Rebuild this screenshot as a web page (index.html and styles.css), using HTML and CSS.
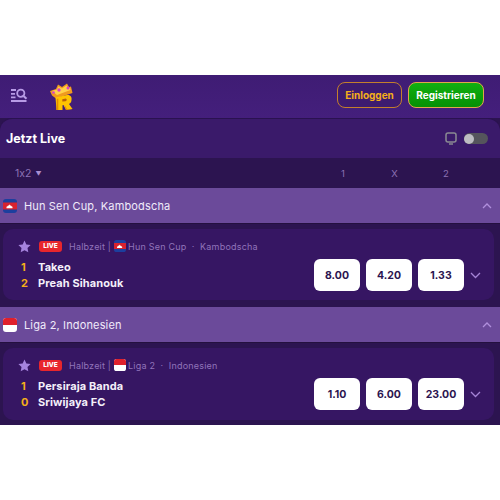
FILE: index.html
```html
<!DOCTYPE html>
<html lang="de">
<head>
<meta charset="utf-8">
<title>Live</title>
<link rel="stylesheet" href="styles.css">
</head>
<body>
<div class="top-space"></div>
<div class="app">
  <header class="header">
    <svg class="menu-search" width="18" height="14" viewBox="0 0 18 14" fill="none" stroke="#b79be6" stroke-width="1.800">
      <path d="M1 2h5M1 5.800h4M1 9.400h4.500M1 13h15.500"/>
      <circle cx="10.800" cy="5.200" r="3.600"/>
      <path d="M13.500 8l3 2.700" stroke-width="2.200"/>
    </svg>
    <svg class="logo" width="23" height="27" viewBox="0 0 23 27">
      <path d="M0 8l6-2 2-4.500 4 2.500 5-3.500 2 3.500 2-.5 1.500 6.500L6 15.500 2 12.500z" fill="#f09a1e"/>
      <path d="M2 8l5-1.500 1.500-3 3.500 2 4.500-3 1.500 3 2-.5.500 2L7 12z" fill="#ffd24a"/>
      <path d="M5.500 14.500L17 12c3.500-.5 5 2 4.500 5 0 2-1 3.300-2.500 4l3.500 5-6.500 1-2.500-5-1 .2V27H6.500z" fill="#ffc400"/>
      <path d="M12.300 16.200l3.400-.7c1.500 0 1.300 2.400-.2 2.700l-3.200.4z" fill="#b8620a"/>
      <path d="M6.500 27l.3-11 1.500-.4V27zM14.500 22l2.700 4.300 5-.5.300.2-6.500 1z" fill="#e58c00"/>
      <circle cx="9" cy="7" r="1.700" fill="#d93fc8"/>
      <circle cx="18" cy="5" r="1.500" fill="#d93fc8"/>
      <circle cx="3.500" cy="9.500" r="1.300" fill="#d93fc8"/>
    </svg>
    <div class="auth">
      <button class="btn btn-login">Einloggen</button>
      <button class="btn btn-register">Registrieren</button>
    </div>
  </header>
  <section class="panel">
    <div class="title-row">
      <h1 class="title">Jetzt Live</h1>
      <svg class="tv" width="12" height="13" viewBox="0 0 12 13" fill="none" stroke="#8a8a92" stroke-width="1.500">
        <rect x="1" y="1" width="10" height="9" rx="2"/>
        <path d="M4 12h4"/>
      </svg>
      <span class="toggle"><span class="knob"></span></span>
    </div>
    <div class="market-row">
      <span class="market">1x2 <i class="caret">▼</i></span>
      <div class="cols"><span>1</span><span>X</span><span>2</span></div>
    </div>

    <div class="group-head">
      <svg class="flag-lg" viewBox="0 0 14 14"><use href="#kh"/></svg>
      <span class="group-name">Hun Sen Cup, Kambodscha</span>
      <svg class="chev" width="10" height="6" viewBox="0 0 10 6" fill="none" stroke="#b08fdc" stroke-width="1.300"><path d="M1 5l4-4 4 4"/></svg>
    </div>
    <article class="card">
      <div class="meta">
        <svg class="star" width="13" height="13" viewBox="0 0 24 24"><path d="M12 1l3.400 7.300 7.900 1-5.800 5.500 1.500 7.900-7-3.900-7 3.900 1.500-7.900L.7 9.300l7.900-1z"/></svg>
        <span class="live">LIVE</span>
        <span class="info">Halbzeit |</span>
        <svg class="flag-sm" viewBox="0 0 14 14"><use href="#kh"/></svg>
        <span class="info">Hun Sen Cup&nbsp; · &nbsp;Kambodscha</span>
      </div>
      <div class="body">
        <div class="teams">
          <div class="team"><b class="score">1</b><span>Takeo</span></div>
          <div class="team"><b class="score">2</b><span>Preah Sihanouk</span></div>
        </div>
        <button class="odd">8.00</button><button class="odd">4.20</button><button class="odd">1.33</button>
        <svg class="chev-down" width="11" height="7" viewBox="0 0 11 7" fill="none" stroke="#a583d6" stroke-width="1.300"><path d="M1 1l4.500 4.500L10 1"/></svg>
      </div>
    </article>

    <div class="group-head">
      <svg class="flag-lg" viewBox="0 0 14 14"><use href="#id"/></svg>
      <span class="group-name">Liga 2, Indonesien</span>
      <svg class="chev" width="10" height="6" viewBox="0 0 10 6" fill="none" stroke="#b08fdc" stroke-width="1.300"><path d="M1 5l4-4 4 4"/></svg>
    </div>
    <article class="card card-last">
      <div class="meta">
        <svg class="star" width="13" height="13" viewBox="0 0 24 24"><path d="M12 1l3.400 7.300 7.900 1-5.800 5.500 1.500 7.900-7-3.900-7 3.900 1.500-7.900L.7 9.300l7.900-1z"/></svg>
        <span class="live">LIVE</span>
        <span class="info">Halbzeit |</span>
        <svg class="flag-sm" viewBox="0 0 14 14"><use href="#id"/></svg>
        <span class="info">Liga 2&nbsp; · &nbsp;Indonesien</span>
      </div>
      <div class="body">
        <div class="teams">
          <div class="team"><b class="score">1</b><span>Persiraja Banda</span></div>
          <div class="team"><b class="score">0</b><span>Sriwijaya FC</span></div>
        </div>
        <button class="odd">1.10</button><button class="odd">6.00</button><button class="odd">23.00</button>
        <svg class="chev-down" width="11" height="7" viewBox="0 0 11 7" fill="none" stroke="#a583d6" stroke-width="1.300"><path d="M1 1l4.500 4.500L10 1"/></svg>
      </div>
    </article>
  </section>
</div>
<svg class="defs" width="0" height="0">
  <defs>
    <g id="kh">
      <rect width="14" height="14" rx="3" fill="#1c3f9e"/>
      <rect y="3.500" width="14" height="7" fill="#d8232f"/>
      <path d="M3 9.500V8l1-.5.700-1 .6.500.7-1.500.7 1.500.6-.5.700 1 1 .5v1.500z" fill="#fff" transform="translate(.5 -.2)"/>
    </g>
    <g id="id">
      <rect width="14" height="14" rx="3" fill="#fff"/>
      <path d="M0 7V3a3 3 0 013-3h8a3 3 0 013 3v4z" fill="#e0202c"/>
    </g>
  </defs>
</svg>
</body>
</html>
```
FILE: styles.css
```css
* { box-sizing: border-box; }
html, body { margin: 0; padding: 0; background: #fff; }
body { font-family: "Inter", "Liberation Sans", sans-serif; font-feature-settings: "calt" 0; width: 500px; height: 500px; overflow: hidden; }
.top-space { height: 75px; }
.defs { display: block; }
.app { height: 350px; background: #2c1450; }
.header { height: 43px; background: linear-gradient(#3f1c74, #441f7c); display: flex; align-items: center; padding: 0 16px 0 10px; }
.menu-search { margin-top: -3px; }
.logo { margin-left: 22px; margin-top: -1px; }
.auth { margin-left: auto; display: flex; gap: 6px; margin-top: -4px; }
.btn { font-family: inherit; font-size: 10px; font-weight: 700; height: 26px; border-radius: 8px; padding: 0; cursor: pointer; }
.btn-login { width: 65px; color: #f4ae1a; background: #3d1b70; border: 1.500px solid #c47f2c; }
.btn-register { width: 76px; color: #fff; background: linear-gradient(#10b010, #059005); border: 1.500px solid #e0a84a; }
.panel { display: flex; flex-direction: column; }
.title-row { height: 39px; background: #3a1a6a; border-radius: 12px 12px 0 0; display: flex; align-items: center; padding: 0 12px 0 6px; margin-top: 1px; box-shadow: 0 -1px 0 #2a1250; }
.title { margin: 0 auto 0 0; font-size: 12.500px; font-weight: 700; color: #fff; }
.tv { margin-right: 7px; }
.toggle { width: 24px; height: 11px; border-radius: 6px; background: #55555c; display: block; }
.knob { display: block; width: 10px; height: 10px; margin-top: .5px; border-radius: 50%; background: #bdbdc2; }
.market-row { height: 30px; background: #2c1450; display: flex; align-items: center; padding-left: 15px; color: #8d72b5; font-size: 10.500px; }
.market { display: flex; align-items: center; gap: 4px; }
.caret { font-style: normal; font-size: 6px; color: #a98fd0; }
.cols { margin-left: auto; margin-right: 31px; display: flex; gap: 5.500px; }
.cols span { width: 46px; text-align: center; font-size: 9.500px; }
.group-head { height: 35px; background: #6b4a9a; display: flex; align-items: center; padding: 0 8px 0 3px; box-shadow: 0 1px 0 #24103f; }
.group-name { margin-left: 7px; color: #f1ebfa; font-size: 11px; letter-spacing: .15px; }
.flag-lg { width: 14px; height: 14px; display: block; }
.chev { margin-left: auto; margin-right: 0; }
.card { height: 71px; margin: 6px 6px 7px 3px; background: #361663; border-radius: 10px; padding: 9px 13px 0 15px; }
.card-last { height: 72px; margin-bottom: 0; }
.meta { display: flex; align-items: center; height: 14px; margin-top: 1px; }
.star { fill: #a583de; }
.live { width: 23px; height: 11px; margin: 0 7px 0 8px; border-radius: 3px; background: #e8262c; color: #fff; font-size: 6.500px; font-weight: 800; text-align: center; line-height: 11px; }
.info { color: #9174ba; font-size: 9px; letter-spacing: .2px; }
.flag-sm { width: 12px; height: 12px; margin: 0 2px 0 3px; display: block; }
.body { display: flex; align-items: center; }
.teams { margin-right: auto; margin-top: 5px; }
.team { display: flex; align-items: center; height: 16px; color: #f4f0fa; font-size: 11px; font-weight: 700; letter-spacing: .1px; }
.score { width: 20px; color: #f4ae1a; font-weight: 700; padding-left: 3px; }
.odd { width: 46px; height: 32px; margin: 6px 6px 0 0; background: #fff; border: 0; border-radius: 6px; color: #2c1450; font-family: inherit; font-size: 10.500px; font-weight: 700; padding: 0; }
.chev-down { margin: 6px 0 0 0; }
```
